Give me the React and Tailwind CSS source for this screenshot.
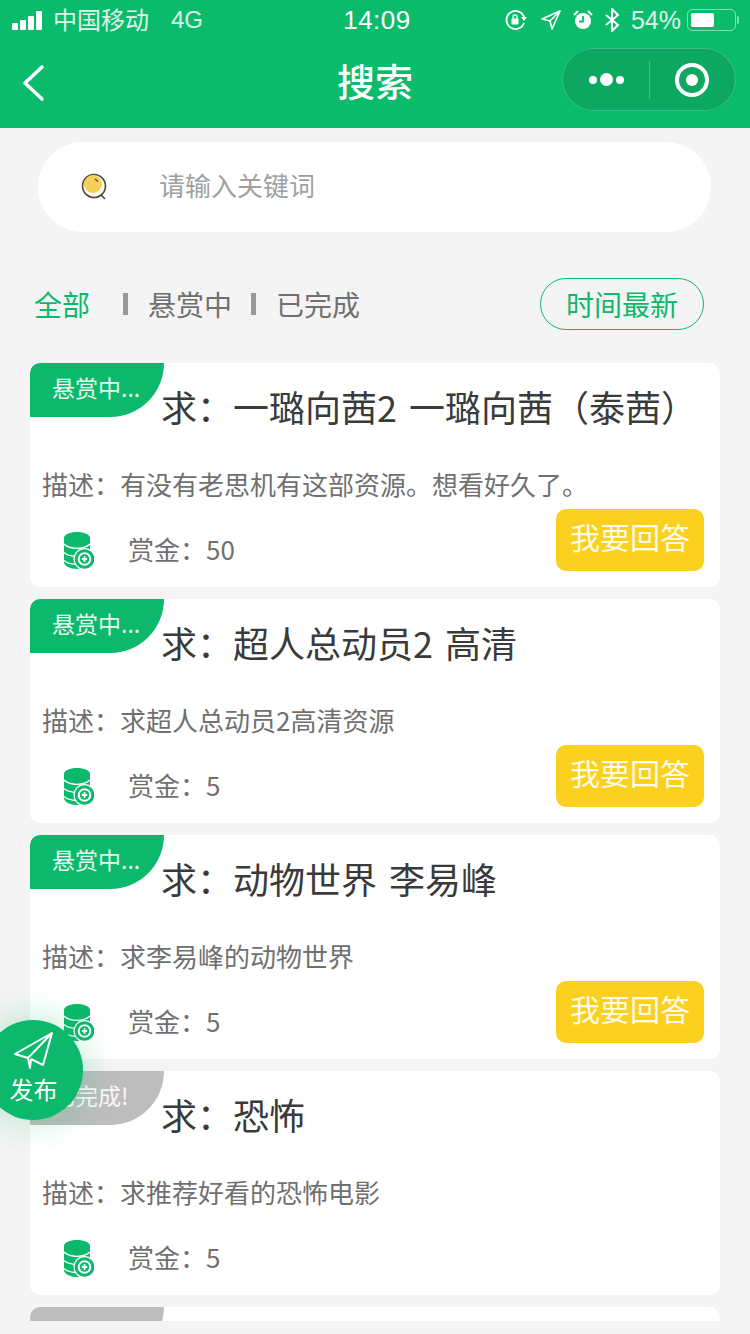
import React from "react";

const fontStack = '"Noto Sans CJK SC", "Liberation Sans", sans-serif';

const items = [
  { status: "悬赏中...", title: "求：一璐向茜2 一璐向茜（泰茜）", desc: "描述：有没有老思机有这部资源。想看好久了。", reward: "赏金：50", open: true },
  { status: "悬赏中...", title: "求：超人总动员2 高清", desc: "描述：求超人总动员2高清资源", reward: "赏金：5", open: true },
  { status: "悬赏中...", title: "求：动物世界 李易峰", desc: "描述：求李易峰的动物世界", reward: "赏金：5", open: true },
  { status: "已完成!", title: "求：恐怖", desc: "描述：求推荐好看的恐怖电影", reward: "赏金：5", open: false },
  { status: "", title: "", desc: "", reward: "", open: false },
];

function CoinIcon() {
  return (
    <svg width="30" height="38" viewBox="0 0 30 38" className="shrink-0">
      <path d="M0 6C0 2.500 6 0 13 0s13 2.500 13 6v24c0 4-6 7-13 7S0 34 0 30z" fill="#0cb86b" />
      <path d="M0 12c3 3 8 4.300 13 4.300s10-1.300 13-4.300" fill="none" stroke="#fff" strokeWidth="1.300" />
      <path d="M0 20.500c3 2.800 8 4 13 4" fill="none" stroke="#fff" strokeWidth="1.300" />
      <path d="M0 28.500c3 2.800 8 4 13 4" fill="none" stroke="#fff" strokeWidth="1.300" />
      <circle cx="20.500" cy="27" r="11" fill="#fff" />
      <circle cx="20.500" cy="27" r="8.300" fill="#fff" stroke="#0cb86b" strokeWidth="3" />
      <circle cx="20.500" cy="27" r="4.800" fill="#0cb86b" />
      <path d="M17.800 27h5.400M20.500 24.300v5.400" stroke="#fff" strokeWidth="1.800" />
    </svg>
  );
}

function SearchIcon() {
  return (
    <svg width="30" height="30" viewBox="0 0 30 30" className="shrink-0">
      <circle cx="14" cy="14" r="11.500" fill="#fdf8ea" stroke="#4a4a40" strokeWidth="1.600" />
      <circle cx="13" cy="12" r="9" fill="#f5cf5a" />
      <path d="M15 7l3 2.500" stroke="#5a4a20" strokeWidth="1.300" />
      <path d="M21 23l4 4" stroke="#4a4a40" strokeWidth="1.600" />
    </svg>
  );
}

function StatusBar() {
  return (
    <div className="h-10 grid grid-cols-3 items-center text-white text-[24px] leading-none">
      <div className="flex items-center pl-3">
        <div className="flex items-end gap-[2px] w-[33px]">
          <span className="w-[6px] h-[7px] rounded-[1px] bg-white" />
          <span className="w-[6px] h-[10px] rounded-[1px] bg-white" />
          <span className="w-[6px] h-[14px] rounded-[1px] bg-white" />
          <span className="w-[6px] h-[19px] rounded-[1px] bg-white" />
        </div>
        <span className="ml-2 opacity-85 whitespace-nowrap -mt-[2px]">中国移动</span>
        <span className="ml-[22px] opacity-85" style={{ fontFamily: '"Liberation Sans", sans-serif' }}>4G</span>
      </div>
      <div className="text-center text-[26px] tracking-[0.5px] pl-[4px]" style={{ fontFamily: '"Liberation Sans", sans-serif' }}>14:09</div>
      <div className="flex items-center justify-end pr-[11px]">
        <svg width="24" height="22" viewBox="0 0 24 22" fill="none" stroke="#fff" strokeWidth="1.800">
          <path d="M20 14a9 9 0 1 1 0-6" />
          <path d="M17 8h6l-3 4z" fill="#fff" stroke="none" />
          <rect x="7.500" y="9.500" width="7" height="6" rx="1" fill="#fff" stroke="none" />
          <path d="M9 10V8a2 2 0 0 1 4 0v2" strokeWidth="1.300" />
        </svg>
        <svg className="ml-[13px]" width="20" height="20" viewBox="0 0 20 20" fill="none" stroke="#fff" strokeWidth="1.600" strokeLinejoin="round">
          <path d="M19 1L1 9l8 2 2 8z" />
          <path d="M19 1L9 11" />
        </svg>
        <svg className="ml-[12px]" width="20" height="20" viewBox="0 0 20 20">
          <circle cx="10" cy="11" r="8" fill="#fff" />
          <path d="M10 6v5.500H6" stroke="#0abb6c" strokeWidth="1.800" fill="none" />
          <path d="M1 5l4-4M19 5l-4-4" stroke="#fff" strokeWidth="2" />
        </svg>
        <svg className="ml-[11px]" width="16" height="24" viewBox="0 0 16 24" fill="none" stroke="#fff" strokeWidth="2">
          <path d="M2 7l12 10-6 6V1l6 6L2 17" />
        </svg>
        <span className="ml-[11px] opacity-85 text-[25px]" style={{ fontFamily: '"Liberation Sans", sans-serif' }}>54%</span>
        <div className="ml-[6px] w-[49px] h-[22px] rounded-[5px] border border-white/50 p-[3px]">
          <div className="w-[23px] h-full rounded-[2px] bg-white" />
        </div>
        <span className="ml-[1px] w-[2px] h-[8px] rounded-r bg-white/50" />
      </div>
    </div>
  );
}

function NavBar() {
  return (
    <div className="h-[88px] relative flex items-center justify-center">
      <svg className="absolute left-[21px] top-[24px]" width="24" height="38" viewBox="0 0 24 38" fill="none" stroke="#fff" strokeWidth="3.500" strokeLinecap="round" strokeLinejoin="round">
        <path d="M21 3L4 19l17 16" />
      </svg>
      <span className="text-white text-[38px] font-medium leading-none -mt-[8px]">搜索</span>
      <div className="absolute right-[14px] top-[8px] w-[174px] h-[63px] rounded-full bg-[#0ca862] border border-white/20 flex items-center">
        <div className="w-[86px] h-full flex items-center justify-center gap-[3px] pl-[1px]">
          <span className="w-[8px] h-[8px] rounded-full bg-white" />
          <span className="w-[13px] h-[13px] rounded-full bg-white" />
          <span className="w-[8px] h-[8px] rounded-full bg-white" />
        </div>
        <div className="w-px h-[38px] bg-white/25" />
        <div className="flex-1 flex items-center justify-center pr-[2px]">
          <div className="w-[34px] h-[34px] rounded-full border-[4px] border-white flex items-center justify-center">
            <span className="w-[12px] h-[12px] rounded-full bg-white" />
          </div>
        </div>
      </div>
    </div>
  );
}

function QuestionCard({ status, title, desc, reward, open }) {
  return (
    <div className="bg-white rounded-[10px] h-[224px] shrink-0 overflow-hidden">
      <div className="flex items-start">
        <div
          className={`w-[134px] h-[54px] rounded-br-[54px] shrink-0 pl-[22px] pt-[6px] text-[23px] leading-[36px] text-white/90 whitespace-nowrap ${
            open ? "bg-[#0cb86b]" : "bg-[#bdbdbd]"
          }`}
        >
          {status}
        </div>
        <div className="ml-[-3px] mt-[20px] text-[36px] leading-[46px] text-[#3a3a3a] whitespace-nowrap [word-spacing:4px]">{title}</div>
      </div>
      <div className="mt-[39px] pl-3 text-[26px] leading-[32px] text-[#707070] whitespace-nowrap">{desc}</div>
      <div className="mt-[9px] flex items-start justify-between pr-4">
        <div className="mt-[23px] h-[38px] pl-[34px] flex items-center gap-[34px]">
          <CoinIcon />
          <span className="text-[26px] text-[#707070] leading-none -mt-[4px] [word-spacing:1px]">{reward}</span>
        </div>
        {open && (
          <div className="w-[148px] h-[62px] rounded-[10px] bg-[#fbd01f] flex items-center justify-center text-[30px] text-white/90 leading-none pb-[9px]">
            我要回答
          </div>
        )}
      </div>
    </div>
  );
}

export default function App() {
  return (
    <div className="w-[750px] h-[1334px] relative overflow-hidden bg-[#f4f4f4]" style={{ fontFamily: fontStack }}>
      <div className="h-[128px] bg-[#0abb6c]">
        <StatusBar />
        <NavBar />
      </div>

      <div className="mt-[14px] ml-[38px] mr-[39px] h-[90px] rounded-full bg-white flex items-center pl-[42px]">
        <SearchIcon />
        <span className="ml-[49px] text-[26px] text-[#a0a0a0] leading-none -mt-[4px]">请输入关键词</span>
      </div>

      <div className="mt-[46px] h-[52px] pl-[34px] pr-[46px] flex items-center text-[28px] leading-none text-[#707070]">
        <span className="text-[#0cb86b]">全部</span>
        <span className="ml-[33px] w-[5px] h-[22px] bg-[#999]" />
        <span className="ml-[20px]">悬赏中</span>
        <span className="ml-[19px] w-[5px] h-[22px] bg-[#999]" />
        <span className="ml-[20px]">已完成</span>
        <div className="ml-auto w-[164px] h-[52px] rounded-full border border-[#0cb86b] text-[#0cb86b] flex items-center justify-center">
          时间最新
        </div>
      </div>

      <div className="mt-[33px] mx-[30px] h-[958px] overflow-hidden flex flex-col gap-3">
        {items.map((item, index) => (
          <QuestionCard key={index} {...item} />
        ))}
      </div>

      <div className="absolute left-[-17px] top-[1020px] w-[100px] h-[100px] rounded-full bg-[#0cb86b] shadow-[0_0_36px_rgba(12,184,107,0.3)] flex flex-col items-center text-white pl-[1px]">
        <svg className="mt-[10px] ml-[1px]" width="40" height="40" viewBox="0 0 40 40" fill="none" stroke="#fff" strokeWidth="2" strokeLinejoin="round">
          <path d="M38 3L1 24l13 4L38 3 29 35l-12-6" />
          <path d="M14 28l2 10 1-9" />
        </svg>
        <span className="text-[24px] leading-none mt-[7px]">发布</span>
      </div>
    </div>
  );
}
